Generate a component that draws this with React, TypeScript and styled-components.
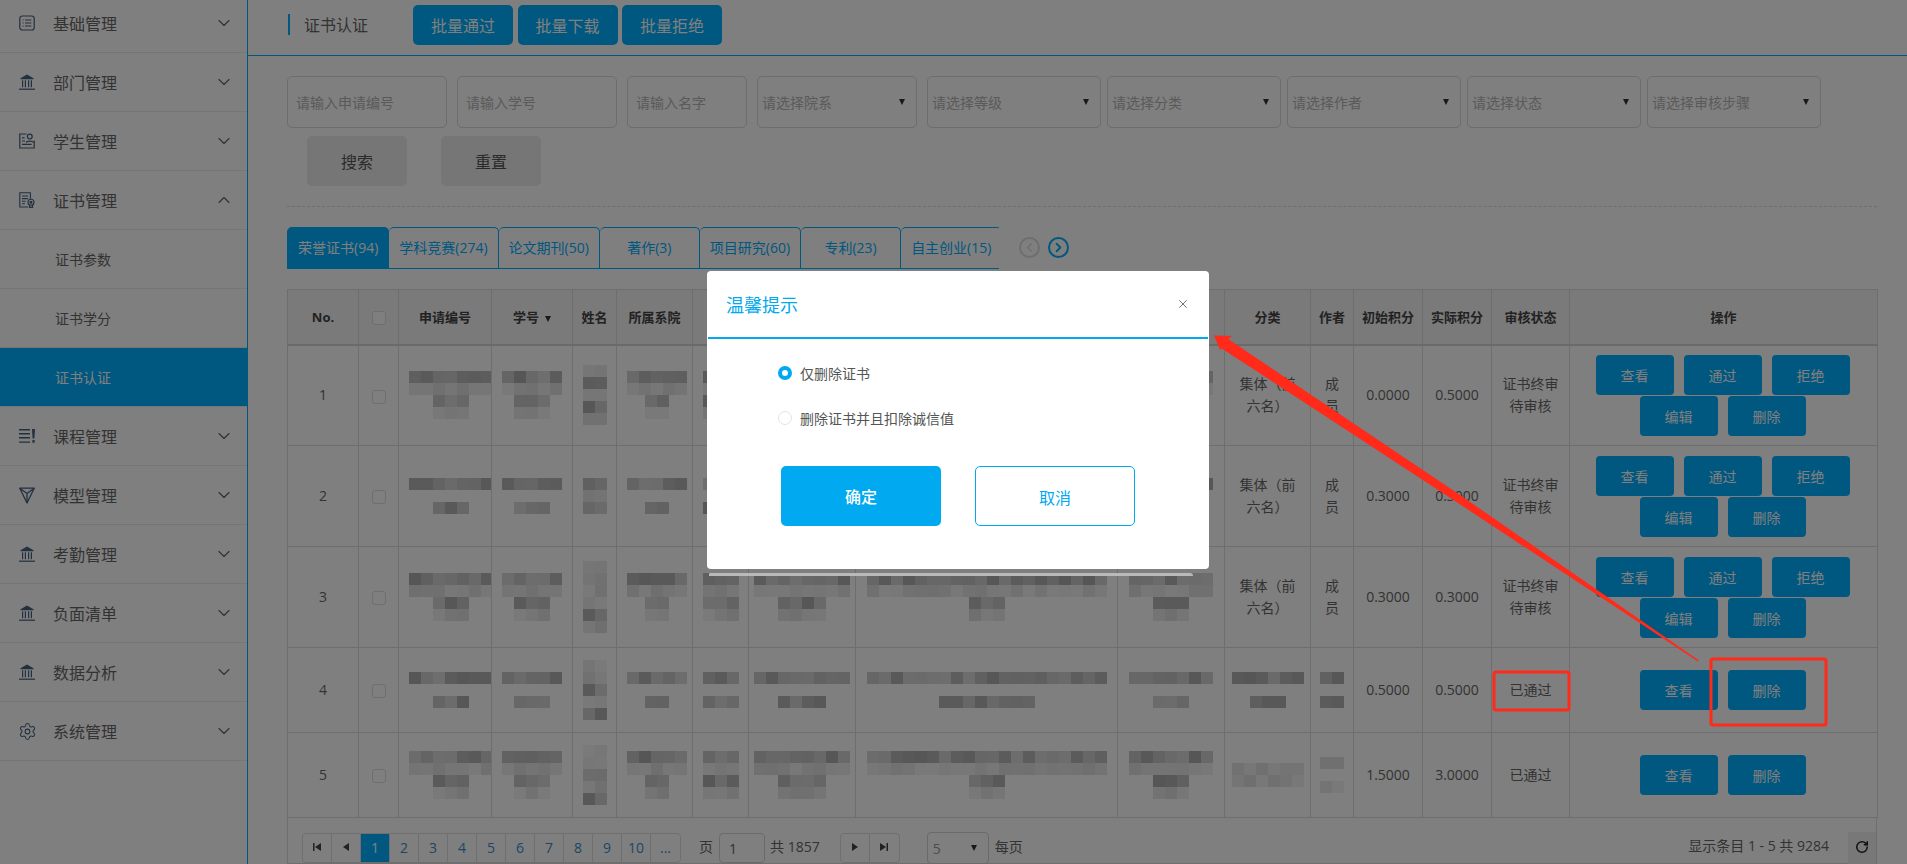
import React from 'react';
import styled, { createGlobalStyle } from 'styled-components';
import { ChevronDown, ChevronUp, ChevronLeft, ChevronRight, X, RotateCw, Settings } from 'lucide-react';

const BLUE = '#00aeff';
const MODAL = '#00a9f0';
const LINE = '#dcdcdc';

const Global = createGlobalStyle`
  html, body { margin: 0; padding: 0; background: #fff; }
  * { box-sizing: border-box; }
  body { font-family: "Open Sans", "Noto Sans CJK SC", sans-serif; font-size: 14px; color: #666; }
`;

const Page = styled.div`
  display: flex; width: 1907px; height: 864px; overflow: hidden; position: relative; background: #fff;
`;

/* ---------- sidebar ---------- */
const Side = styled.aside`
  width: 248px; flex: none; border-right: 1px solid ${BLUE}; overflow: hidden;
`;
const NavList = styled.nav`
  margin-top: -6px;
`;
const NavRow = styled.div<{ $sub?: boolean; $active?: boolean }>`
  height: 59px; display: flex; align-items: center; border-bottom: 1px solid #ebebeb;
  padding: 0 13px 0 ${p => (p.$sub ? '55px' : '19px')};
  font-size: ${p => (p.$sub ? '14px' : '16px')};
  background: ${p => (p.$active ? BLUE : 'transparent')};
  color: ${p => (p.$active ? '#fff' : '#666')};
`;
const NavIcon = styled.span`
  width: 16px; height: 18px; margin-right: 18px; display: flex; align-items: center; justify-content: center; color: #45607f;
  flex: none;
  svg { display: block; flex: none; }
`;
const NavLabel = styled.span`flex: 1;`;

/* ---------- main ---------- */
const Main = styled.main`flex: 1; min-width: 0;`;
const TopBar = styled.header`
  height: 56px; border-bottom: 1px solid ${BLUE}; padding-left: 40px; display: flex; align-items: flex-start;
`;
const Title = styled.h1`
  margin: 14px 45px 0 0; height: 21px; padding-left: 14px; border-left: 2px solid ${BLUE};
  font-size: 16px; font-weight: 400; line-height: 23px; color: #666;
`;
const BulkGroup = styled.div`display: flex; gap: 4.5px; margin-top: 5px;`;
const BulkButton = styled.button`
  width: 100px; height: 40px; border: 0; border-radius: 5px; background: ${BLUE}; color: #fff;
  font: 16px "Open Sans", "Noto Sans CJK SC", sans-serif; padding: 0;
`;
const Content = styled.section`padding: 20px 30px 0 39px;`;
const Filters = styled.div`display: flex; gap: 10px;`;
const FilterGroup = styled.div<{ $gap: number }>`display: flex; gap: ${p => p.$gap}px;`;
const TextInput = styled.input<{ $w: number }>`
  width: ${p => p.$w}px; height: 52px; border: 1px solid #dadada; border-radius: 5px; padding: 0 8px;
  font: 14px "Open Sans", "Noto Sans CJK SC", sans-serif; color: #666; background: #fff;
  &::placeholder { color: #b4b4b4; opacity: 1; }
`;
const Select = styled.div<{ $w: number }>`
  width: ${p => p.$w}px; height: 52px; border: 1px solid #dadada; border-radius: 5px; padding: 0 11px 0 4px;
  display: flex; align-items: center; justify-content: space-between; color: #b4b4b4;
`;
const Caret = styled.i`
  width: 0; height: 0; border-left: 3.5px solid transparent; border-right: 3.5px solid transparent;
  border-top: 6px solid #333;
`;
const SearchRow = styled.div`display: flex; gap: 34px; margin: 8px 0 0 20px;`;
const GreyButton = styled.button`
  width: 100px; height: 50px; border: 0; border-radius: 5px; background: #ededed; color: #555;
  font: 16px "Open Sans", "Noto Sans CJK SC", sans-serif; padding: 0;
`;
const Dashed = styled.hr`margin: 20px 0 0; border: 0; border-top: 1px dashed #ddd;`;
const TabRow = styled.div`display: flex; align-items: center; margin-top: 20px;`;
const TabList = styled.div`
  width: 712px; height: 42px; display: flex; overflow: hidden; border-bottom: 1px solid ${BLUE};
`;
const Tab = styled.div<{ $active?: boolean }>`
  flex: none; min-width: 100px; height: 41px; padding: 0 10px 2px; display: flex; align-items: center; justify-content: center;
  white-space: nowrap; color: ${p => (p.$active ? '#fff' : BLUE)}; background: ${p => (p.$active ? BLUE : '#fff')};
  border: 1px solid ${BLUE}; border-bottom: 0; border-left-width: ${p => (p.$active ? 1 : 0)}px;
  border-radius: 5px 5px 0 0;
`;
const RoundArrow = styled.span<{ $on?: boolean }>`
  width: 21px; height: 21px; border-radius: 50%; margin: -2px 0 0 8px; display: flex; align-items: center; justify-content: center;
  border: 2px solid ${p => (p.$on ? BLUE : '#dcdcdc')}; color: ${p => (p.$on ? BLUE : '#dcdcdc')};
  &:first-of-type { margin-left: 20px; }
`;

/* ---------- table ---------- */
const Table = styled.table`
  width: 1590px; margin-top: 20px; border-collapse: collapse; table-layout: fixed; border: 1px solid ${LINE};
`;
const Th = styled.th`
  height: 55px; background: #f4f4f4; border: 1px solid ${LINE}; border-bottom: 2px solid #d4d4d4; padding: 0;
  font-size: 13px; font-weight: 700; color: #444; text-align: center; white-space: nowrap;
`;
const Td = styled.td<{ $h?: number; $flush?: boolean }>`
  height: ${p => p.$h || 85}px; border: 1px solid ${LINE}; padding: 0 ${p => (p.$flush ? 0 : 10)}px; text-align: center; line-height: 22px;
  color: #666; overflow: hidden;
`;
const Check = styled.i`
  display: inline-block; width: 14px; height: 14px; border: 1px solid #dcdcdc; border-radius: 3px; background: #fff;
  vertical-align: middle;
`;
const SortMark = styled.i`
  display: inline-block; margin-left: 6px; width: 0; height: 0; vertical-align: middle;
  border-left: 3px solid transparent; border-right: 3px solid transparent; border-top: 6px solid #333;
`;
const ActionWrap = styled.div`display: flex; flex-wrap: wrap; justify-content: center; gap: 1px 10px; margin-left: -2px;`;
const ActionButton = styled.button`
  width: 78px; height: 40px; border: 0; border-radius: 4px; background: ${BLUE}; color: #fff; padding: 0;
  font: 14px "Open Sans", "Noto Sans CJK SC", sans-serif;
`;
const MosaicBox = styled.div`display: inline-flex; flex-direction: column; align-items: center; vertical-align: middle;`;
const MosaicRow = styled.div`display: flex; height: 12px;`;
const Tile = styled.span`display: block; width: 12px; height: 12px;`;

/* ---------- pager ---------- */
const Pager = styled.div`
  height: 46px; padding: 15px 0 0 14px; display: flex; align-items: flex-start; border: 1px solid ${LINE}; border-top: 0;
  color: #666;
`;
const PagerGroup = styled.div<{ $ml?: number }>`
  display: flex; height: 30px; border: 1px solid #dedede; border-radius: 4px; overflow: hidden; margin-left: ${p => p.$ml || 0}px;
`;
const PagerCell = styled.span<{ $active?: boolean; $w?: number }>`
  width: ${p => p.$w || 29}px; display: flex; align-items: center; justify-content: center; flex: none; padding-bottom: 2px;
  border-right: 1px solid #dedede; color: ${p => (p.$active ? '#fff' : '#428bca')};
  background: ${p => (p.$active ? BLUE : 'transparent')};
  &:last-child { border-right: 0; }
  svg { display: block; }
`;
const PagerText = styled.span<{ $ml?: number }>`
  height: 30px; line-height: 27px; margin-left: ${p => p.$ml || 0}px; white-space: nowrap;
`;
const PageInput = styled.span`
  width: 46px; height: 30px; margin-left: 6px; border: 1px solid #d4d4d4; border-radius: 4px; padding-left: 9px;
  line-height: 30px; color: #666;
`;
const SizeSelect = styled.span`
  width: 62px; height: 32px; margin-left: 27px; border: 1px solid #d4d4d4; border-radius: 4px; padding: 0 11px 0 5px; margin-top: -1px;
  display: flex; align-items: center; justify-content: space-between; color: #999;
`;
const PagerInfo = styled.span`margin-left: auto; height: 30px; line-height: 25px; white-space: nowrap;`;
const Refresh = styled.span`
  width: 28px; height: 32px; margin: -1px 0 0 19px; background: #f0f0f0; display: flex; align-items: center; justify-content: center;
  padding-bottom: 3px; color: #222;
`;

/* ---------- overlay + dialog ---------- */
const Dim = styled.div`position: absolute; inset: 0; background: rgba(0, 0, 0, 0.5);`;
const Dialog = styled.div`
  position: absolute; left: 707px; top: 271px; width: 502px; height: 298px; background: #fff; border-radius: 4px;
  &::after {
    content: ''; position: absolute; left: 2px; right: 16px; top: 302px; height: 3px; background: #b9b9b9;
    border-radius: 2px 6px 0 0;
  }
`;
const DialogHead = styled.div`
  height: 68px; border-bottom: 2px solid ${MODAL}; margin: 0 1px; padding: 0 18px 0 18px;
  display: flex; align-items: center; justify-content: space-between; color: ${MODAL};
`;
const DialogTitle = styled.span`font-size: 18px;`;
const CloseIcon = styled.span`color: #555; display: flex; margin-top: -1px;`;
const DialogBody = styled.div`padding: 11px 0 0 71px;`;
const Option = styled.div`height: 45px; display: flex; align-items: center; gap: 8px; color: #555;`;
const Radio = styled.i<{ $on?: boolean }>`
  width: 14px; height: 14px; border-radius: 50%; display: block; background: #fff;
  border: ${p => (p.$on ? `4px solid ${MODAL}` : '1px solid #e4e4e4')};
`;
const DialogActions = styled.div`display: flex; gap: 34px; margin: 26px 0 0 3px;`;
const Confirm = styled.button`
  width: 160px; height: 60px; background: ${MODAL}; color: #fff; border: 0; border-radius: 5px; padding: 0;
  font: 500 16px "Open Sans", "Noto Sans CJK SC", sans-serif;
`;
const Cancel = styled.button`
  width: 160px; height: 60px; background: #fff; color: ${MODAL}; border: 1px solid ${MODAL}; border-radius: 5px; padding: 2px 0 0;
  font: 16px "Open Sans", "Noto Sans CJK SC", sans-serif;
`;
const Annotation = styled.svg`position: absolute; inset: 0; pointer-events: none;`;

/* ---------- icons ---------- */
const Bank = () => (
  <svg width="16" height="16" viewBox="0 0 16 16" fill="currentColor">
    <path d="M8 .5 14.5 4.2V5.2H1.5V4.2Z" />
    <path d="M3 6.2h1.2v7H3zM5.8 6.2H7v7H5.8zM9 6.2h1.2v7H9zM11.8 6.2H13v7h-1.2z" />
    <path d="M0 14.6h16v1.2H0z" />
  </svg>
);
const ListCard = () => (
  <svg width="16" height="16" viewBox="0 0 16 16" fill="none" stroke="currentColor" strokeWidth="1.2">
    <rect x=".8" y="1" width="14.4" height="14" rx="2.5" />
    <path d="M3.6 5h1M6 5h6.4M3.6 8h1M6 8h6.4M3.6 11h1M6 11h6.4" />
  </svg>
);
const IdCard = () => (
  <svg width="16" height="16" viewBox="0 0 16 16" fill="none" stroke="currentColor" strokeWidth="1.2">
    <path d="M7.5 1H.8v14h14.4V7.5" />
    <circle cx="10.8" cy="3.6" r="2.4" />
    <path d="M7.2 9.6c.6-2 6.4-2 7.4 0M3 4.8h2.6M3 8h3M3 11.4h9.6" />
  </svg>
);
const CertDoc = () => (
  <svg width="16" height="16" viewBox="0 0 16 16" fill="none" stroke="currentColor" strokeWidth="1.1">
    <path d="M9 15H.8V.8h10.6v6" />
    <path d="M3 4h6.2M3 6.6h6.2M3 9.2h3.6M3 11.8h3" />
    <circle cx="12" cy="10.2" r="3" />
    <circle cx="12" cy="10.2" r="1" fill="currentColor" />
    <path d="M10.4 13v3l1.6-1 1.6 1v-3" />
  </svg>
);
const Lines = () => (
  <svg width="16" height="14" viewBox="0 0 16 14" fill="currentColor">
    <path d="M0 0h11v1.4H0zM0 4h11v1.4H0zM0 8h11v1.4H0zM0 12.4h11v1.4H0z" />
    <path d="M13 0h3l-.6 9.5h-1.8zM13.4 11h2.2v2.8h-2.2z" />
  </svg>
);
const Funnel = () => (
  <svg width="16" height="17" viewBox="0 0 16 17" fill="none" stroke="currentColor" strokeWidth="1.3" strokeLinejoin="round">
    <path d="M.8 1.2h14.4L8 16z" />
    <path d="M.8 1.2 8 6.6l7.2-5.4M8 6.6V16" />
  </svg>
);

type Item = { label: string; icon: React.ReactNode; open?: boolean };
const beforeSub: Item[] = [
  { label: '基础管理', icon: <ListCard /> },
  { label: '部门管理', icon: <Bank /> },
  { label: '学生管理', icon: <IdCard /> },
  { label: '证书管理', icon: <CertDoc />, open: true },
];
const afterSub: Item[] = [
  { label: '课程管理', icon: <Lines /> },
  { label: '模型管理', icon: <Funnel /> },
  { label: '考勤管理', icon: <Bank /> },
  { label: '负面清单', icon: <Bank /> },
  { label: '数据分析', icon: <Bank /> },
  { label: '系统管理', icon: <Settings size={19} strokeWidth={1.3} /> },
];
const NavItem = ({ item }: { item: Item }) => (
  <NavRow>
    <NavIcon>{item.icon}</NavIcon>
    <NavLabel>{item.label}</NavLabel>
    {item.open ? <ChevronUp size={20} strokeWidth={1.4} /> : <ChevronDown size={20} strokeWidth={1.4} />}
  </NavRow>
);

/* ---------- mosaic ---------- */
type MRow = [number, number];
const shade = (seed: number, tone: number) => {
  const r = Math.abs(Math.sin(seed * 12.9898) * 43758.5453) % 1;
  if (tone === 0) return 'transparent';
  const v = tone === 1 ? 172 + Math.round(r * 48) : 222 + Math.round(r * 22);
  return `rgb(${v},${v},${v + 1})`;
};
const Mosaic = ({ rows, seed }: { rows: MRow[]; seed: number }) => (
  <MosaicBox>
    {rows.map(([n, tone], i) => (
      <MosaicRow key={i}>
        {Array.from({ length: n }, (_, j) => (
          <Tile key={j} style={{ background: shade(seed + i * 31 + j * 7 + 1, tone) }} />
        ))}
      </MosaicRow>
    ))}
  </MosaicBox>
);
const gap = (a: number, b: number): MRow[] => [[a, 1], [a, 0], [b, 1]];
const band = (a: number, b: number): MRow[] => [[a, 1], [a, 2], [b, 1], [b, 2]];
const pair = (kind: 'gap' | 'band', a: number, b: number) => (kind === 'gap' ? gap(a, b) : band(a, b));
const nameCols: MRow[][] = [
  [[2, 2], [2, 1], [2, 2], [2, 1], [2, 2]],
  [[2, 1], [2, 2], [2, 1]],
  [[2, 2], [2, 2], [2, 2], [2, 2], [2, 1], [2, 2]],
  [[2, 2], [2, 2], [2, 1], [2, 2], [2, 1]],
  [[2, 2], [2, 2], [2, 1], [2, 2], [2, 1]],
];

const widths = [71, 40, 93, 81, 44, 76, 56, 107, 262, 107, 86, 43, 69, 69, 78, 308];
const Col = styled.col<{ $w: number }>`width: ${p => p.$w}px;`;

type Row = {
  no: number; h: number; kind: 'gap' | 'band'; cat: boolean; init: string; real: string; status: string; full: boolean;
};
const rows: Row[] = [
  { no: 1, h: 101, kind: 'band', cat: true, init: '0.0000', real: '0.5000', status: '证书终审待审核', full: true },
  { no: 2, h: 101, kind: 'gap', cat: true, init: '0.3000', real: '0.3000', status: '证书终审待审核', full: true },
  { no: 3, h: 101, kind: 'band', cat: true, init: '0.3000', real: '0.3000', status: '证书终审待审核', full: true },
  { no: 4, h: 85, kind: 'gap', cat: false, init: '0.5000', real: '0.5000', status: '已通过', full: false },
  { no: 5, h: 85, kind: 'band', cat: false, init: '1.5000', real: '3.0000', status: '已通过', full: false },
];

export default function App() {
  return (
    <>
      <Global />
      <Page>
        <Side>
          <NavList>
            {beforeSub.map(i => <NavItem key={i.label} item={i} />)}
            <NavRow $sub>证书参数</NavRow>
            <NavRow $sub>证书学分</NavRow>
            <NavRow $sub $active>证书认证</NavRow>
            {afterSub.map(i => <NavItem key={i.label} item={i} />)}
          </NavList>
        </Side>
        <Main>
          <TopBar>
            <Title>证书认证</Title>
            <BulkGroup>
              <BulkButton>批量通过</BulkButton>
              <BulkButton>批量下载</BulkButton>
              <BulkButton>批量拒绝</BulkButton>
            </BulkGroup>
          </TopBar>
          <Content>
            <Filters>
              <FilterGroup $gap={10}>
                <TextInput $w={160} placeholder="请输入申请编号" />
                <TextInput $w={160} placeholder="请输入学号" />
                <TextInput $w={120} placeholder="请输入名字" />
                <Select $w={160}>请选择院系<Caret /></Select>
              </FilterGroup>
              <FilterGroup $gap={6}>
                <Select $w={174}>请选择等级<Caret /></Select>
                <Select $w={174}>请选择分类<Caret /></Select>
                <Select $w={174}>请选择作者<Caret /></Select>
                <Select $w={174}>请选择状态<Caret /></Select>
                <Select $w={174}>请选择审核步骤<Caret /></Select>
              </FilterGroup>
            </Filters>
            <SearchRow>
              <GreyButton>搜索</GreyButton>
              <GreyButton>重置</GreyButton>
            </SearchRow>
            <Dashed />
            <TabRow>
              <TabList>
                <Tab $active>荣誉证书(94)</Tab>
                <Tab>学科竞赛(274)</Tab>
                <Tab>论文期刊(50)</Tab>
                <Tab>著作(3)</Tab>
                <Tab>项目研究(60)</Tab>
                <Tab>专利(23)</Tab>
                <Tab>自主创业(15)</Tab>
              </TabList>
              <RoundArrow><ChevronLeft size={15} strokeWidth={2} /></RoundArrow>
              <RoundArrow $on><ChevronRight size={15} strokeWidth={3} /></RoundArrow>
            </TabRow>
            <Table>
              <colgroup>{widths.map((w, i) => <Col key={i} $w={w} />)}</colgroup>
              <thead>
                <tr>
                  <Th>No.</Th>
                  <Th><Check /></Th>
                  <Th>申请编号</Th>
                  <Th>学号<SortMark /></Th>
                  <Th>姓名</Th>
                  <Th>所属系院</Th>
                  <Th /><Th /><Th /><Th />
                  <Th>分类</Th>
                  <Th>作者</Th>
                  <Th>初始积分</Th>
                  <Th>实际积分</Th>
                  <Th>审核状态</Th>
                  <Th>操作</Th>
                </tr>
              </thead>
              <tbody>
                {rows.map(r => (
                  <tr key={r.no}>
                    <Td $h={r.h}>{r.no}</Td>
                    <Td $h={r.h}><Check /></Td>
                    <Td $h={r.h}><Mosaic seed={r.no * 3} rows={pair(r.kind, 7, 3)} /></Td>
                    <Td $h={r.h}><Mosaic seed={r.no * 5} rows={pair(r.kind, 5, 3)} /></Td>
                    <Td $h={r.h}><Mosaic seed={r.no * 7} rows={nameCols[r.no - 1]} /></Td>
                    <Td $h={r.h}><Mosaic seed={r.no * 11} rows={pair(r.kind, 5, 2)} /></Td>
                    <Td $h={r.h} $flush><Mosaic seed={r.no * 13} rows={pair(r.kind, 3, 3)} /></Td>
                    <Td $h={r.h} $flush><Mosaic seed={r.no * 17} rows={pair(r.kind, 8, 4)} /></Td>
                    <Td $h={r.h} $flush><Mosaic seed={r.no * 19} rows={pair(r.kind, 20, r.no === 4 ? 8 : 3)} /></Td>
                    <Td $h={r.h} $flush><Mosaic seed={r.no * 23} rows={pair(r.kind, 7, 3)} /></Td>
                    <Td $h={r.h} $flush={!r.cat}>
                      {r.cat ? '集体（前六名）' : <Mosaic seed={r.no * 29} rows={r.no === 4 ? gap(6, 3) : [[6, 2], [6, 2]]} />}
                    </Td>
                    <Td $h={r.h} $flush={!r.cat}>
                      {r.cat ? '成员' : <Mosaic seed={r.no * 37} rows={r.no === 4 ? gap(2, 2) : [[2, 2], [2, 0], [2, 2]]} />}
                    </Td>
                    <Td $h={r.h}>{r.init}</Td>
                    <Td $h={r.h}>{r.real}</Td>
                    <Td $h={r.h}>{r.status}</Td>
                    <Td $h={r.h}>
                      <ActionWrap>
                        <ActionButton>查看</ActionButton>
                        {r.full && <ActionButton>通过</ActionButton>}
                        {r.full && <ActionButton>拒绝</ActionButton>}
                        {r.full && <ActionButton>编辑</ActionButton>}
                        <ActionButton>删除</ActionButton>
                      </ActionWrap>
                    </Td>
                  </tr>
                ))}
              </tbody>
            </Table>
            <Pager>
              <PagerGroup>
                <PagerCell>
                  <svg width="8" height="8" viewBox="0 0 8 8" fill="#444"><path d="M0 0h1.5v8H0zM8 0v8L2 4z" /></svg>
                </PagerCell>
                <PagerCell>
                  <svg width="6" height="8" viewBox="0 0 6 8" fill="#444"><path d="M6 0v8L0 4z" /></svg>
                </PagerCell>
                {[1, 2, 3, 4, 5, 6, 7, 8, 9, 10].map(n => (
                  <PagerCell key={n} $active={n === 1}>{n}</PagerCell>
                ))}
                <PagerCell>...</PagerCell>
              </PagerGroup>
              <PagerText $ml={18}>页</PagerText>
              <PageInput>1</PageInput>
              <PagerText $ml={5}>共 1857</PagerText>
              <PagerGroup $ml={20}>
                <PagerCell>
                  <svg width="6" height="8" viewBox="0 0 6 8" fill="#444"><path d="M0 0v8l6-4z" /></svg>
                </PagerCell>
                <PagerCell>
                  <svg width="8" height="8" viewBox="0 0 8 8" fill="#444"><path d="M0 0v8l6-4zM6.5 0H8v8H6.5z" /></svg>
                </PagerCell>
              </PagerGroup>
              <SizeSelect>5<Caret /></SizeSelect>
              <PagerText $ml={6}>每页</PagerText>
              <PagerInfo>显示条目 1 - 5 共 9284</PagerInfo>
              <Refresh><RotateCw size={14} strokeWidth={2.6} /></Refresh>
            </Pager>
          </Content>
        </Main>
        <Dim />
        <Dialog>
          <DialogHead>
            <DialogTitle>温馨提示</DialogTitle>
            <CloseIcon><X size={14} strokeWidth={1.4} /></CloseIcon>
          </DialogHead>
          <DialogBody>
            <Option><Radio $on />仅删除证书</Option>
            <Option><Radio />删除证书并且扣除诚信值</Option>
            <DialogActions>
              <Confirm>确定</Confirm>
              <Cancel>取消</Cancel>
            </DialogActions>
          </DialogBody>
        </Dialog>
        <Annotation width="1907" height="864" viewBox="0 0 1907 864">
          <polygon
            fill="#ff2a1a"
            points="1214,335.5 1232,336 1228,339 1463,497 1699,660.5 1698,661.5 1458,503 1221,348 1220.5,351"
          />
          <rect x="1494" y="672" width="75" height="38" rx="2" fill="none" stroke="#ff2a1a" strokeWidth="3" />
          <rect x="1711" y="659" width="115" height="66" rx="2" fill="none" stroke="#ff2a1a" strokeWidth="3" />
        </Annotation>
      </Page>
    </>
  );
}
